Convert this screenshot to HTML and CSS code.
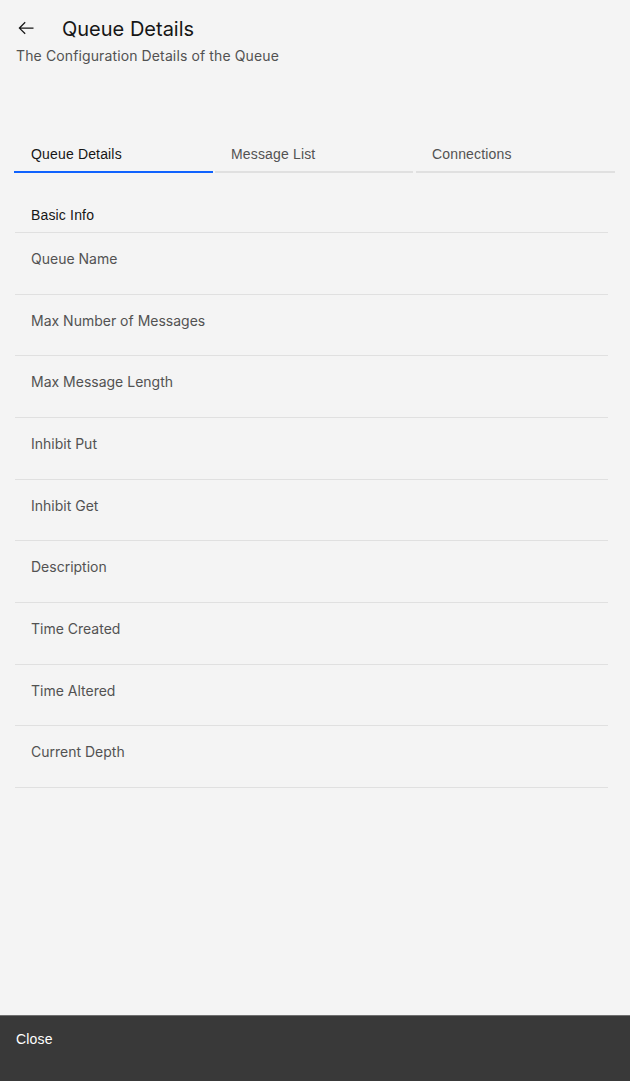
FILE: index.html
```html
<!DOCTYPE html>
<html lang="en">
<head>
<meta charset="utf-8">
<title>Queue Details</title>
<link rel="stylesheet" href="styles.css">
</head>
<body>
<div class="page">
  <header class="header">
    <div class="title-row">
      <svg class="back" viewBox="0 0 32 32" width="20" height="20" aria-hidden="true"><path d="M14 26l1.41-1.41L7.83 17H28v-2H7.83l7.58-7.59L14 6 4 16 14 26z"/></svg>
      <h1 class="title">Queue Details</h1>
    </div>
    <p class="subtitle">The Configuration Details of the Queue</p>
  </header>

  <nav class="tabs">
    <div class="tab active">Queue Details</div>
    <div class="tab">Message List</div>
    <div class="tab">Connections</div>
  </nav>

  <section class="list">
    <div class="section-title">Basic Info</div>
    <div class="row">Queue Name</div>
    <div class="row">Max Number of Messages</div>
    <div class="row">Max Message Length</div>
    <div class="row">Inhibit Put</div>
    <div class="row">Inhibit Get</div>
    <div class="row">Description</div>
    <div class="row">Time Created</div>
    <div class="row">Time Altered</div>
    <div class="row">Current Depth</div>
  </section>

  <footer class="footer">
    <span class="close">Close</span>
  </footer>
</div>
</body>
</html>
```
FILE: styles.css
```css
html, body {
  margin: 0;
  padding: 0;
  background: #f4f4f4;
}
.page {
  min-height: 100vh;
  display: flex;
  flex-direction: column;
  font-family: Inter, "Liberation Sans", sans-serif;
}
.header {
  padding: 16px 16px 0 16px;
}
.title-row {
  display: flex;
  align-items: center;
  height: 26px;
}
.back {
  fill: #161616;
  margin-top: -3px;
}
.title {
  margin: 0 0 0 26px;
  font-size: 20px;
  font-weight: 400;
  line-height: 26px;
  color: #161616;
}
.subtitle {
  margin: 4px 0 0 0;
  font-size: 14px;
  line-height: 20px;
  letter-spacing: 0.12px;
  color: #525252;
}
.tabs {
  display: flex;
  gap: 2px;
  margin: 70px 0 0 14px;
}
.tab {
  width: 199px;
  box-sizing: border-box;
  padding: 9px 16px 8px 16px;
  font-family: "Liberation Sans", Arial, sans-serif;
  font-size: 14px;
  line-height: 18px;
  letter-spacing: 0.16px;
  color: #525252;
  border-bottom: 2px solid #e0e0e0;
}
.tab:nth-child(2) { width: 198px; }
.tab:nth-child(3) { margin-left: 1px; }
.tab.active {
  padding-left: 17px;
  color: #161616;
  border-bottom-color: #0f62fe;
}
.list {
  margin: 0 22px 0 15px;
}
.section-title {
  padding: 33px 16px 8px 16px;
  font-family: "Liberation Sans", Arial, sans-serif;
  font-size: 14px;
  line-height: 18px;
  letter-spacing: 0.16px;
  color: #161616;
  border-bottom: 1px solid #e0e0e0;
}
.row {
  padding: 17px 16px 25.67px 16px;
  font-size: 14px;
  line-height: 18px;
  color: #525252;
  border-bottom: 1px solid #e0e0e0;
}
.footer {
  margin-top: auto;
  height: 66px;
  box-sizing: border-box;
  background: #393939;
  border-top: 1px solid #6f6f6f;
  padding: 12px 16px 0 16px;
}
.close {
  font-family: "Liberation Sans", Arial, sans-serif;
  font-size: 14px;
  line-height: 18px;
  letter-spacing: 0.16px;
  color: #ffffff;
}
```
